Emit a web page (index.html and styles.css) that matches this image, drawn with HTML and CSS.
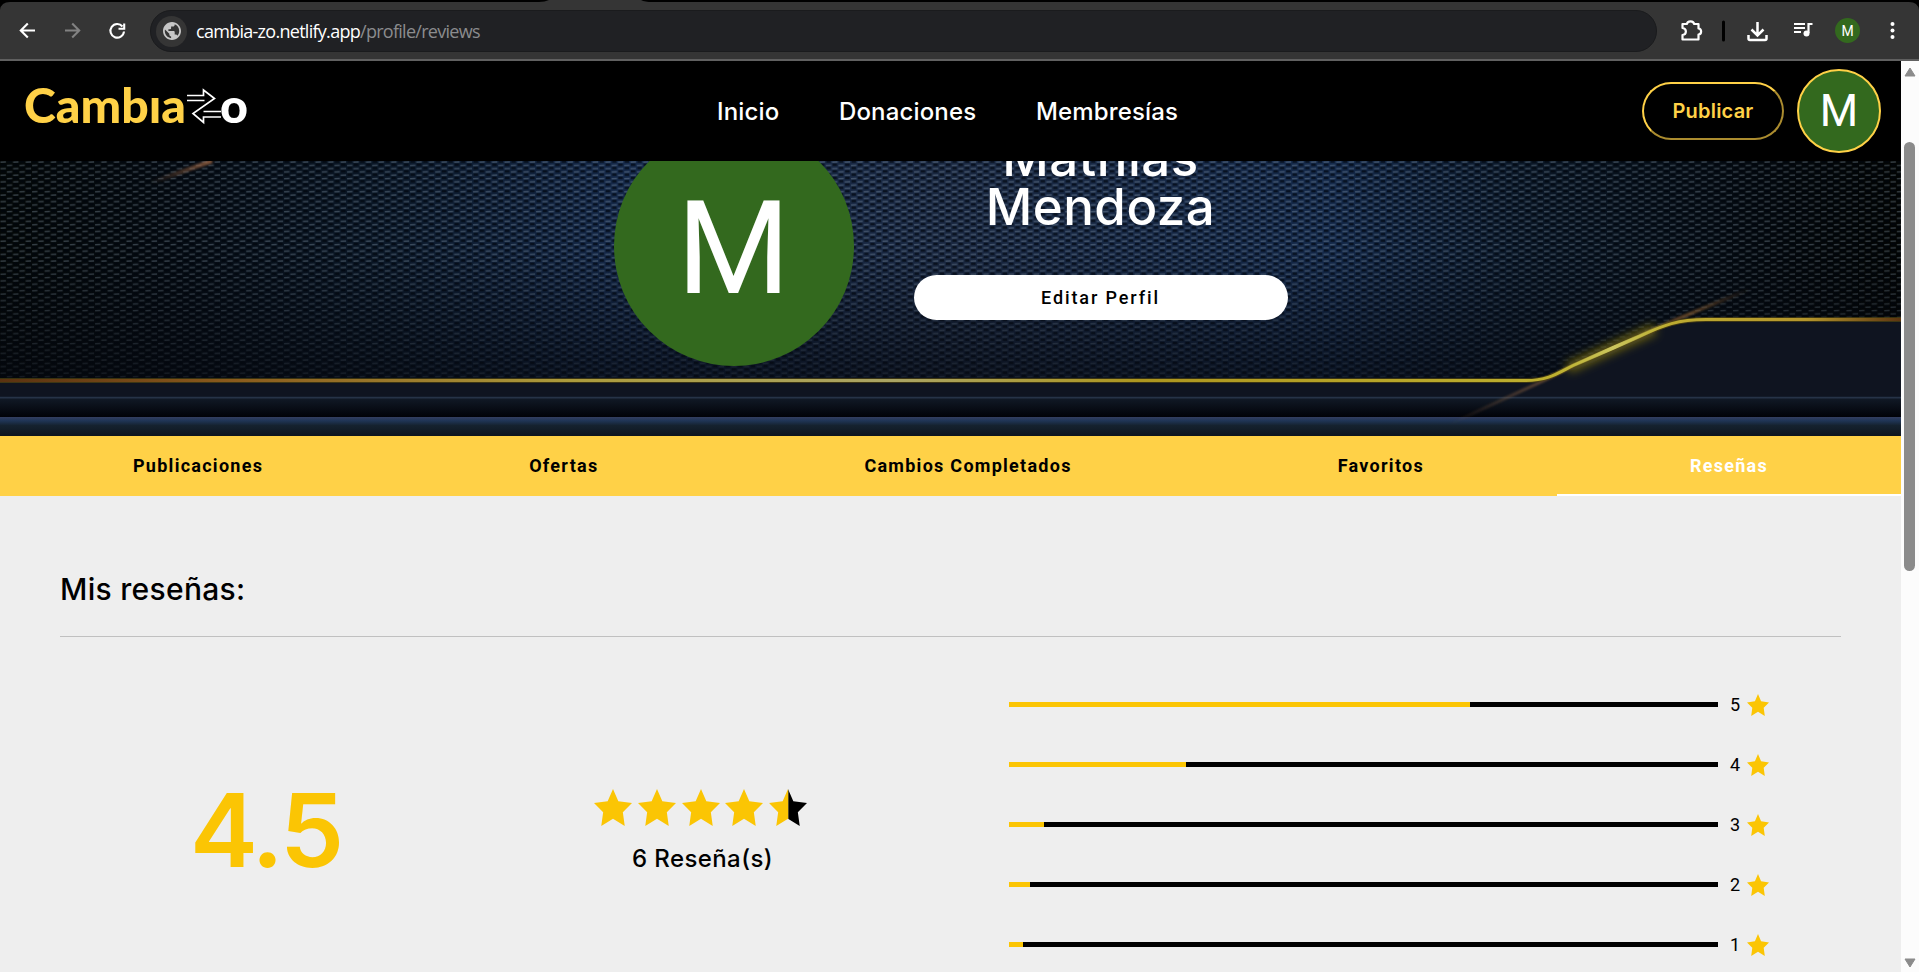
FILE: index.html
```html
<!DOCTYPE html>
<html lang="es">
<head>
<meta charset="utf-8">
<title>CambiaZo - Reseñas</title>
<link rel="stylesheet" href="styles.css">
</head>
<body>
<svg width="0" height="0" class="defs">
  <symbol id="star" viewBox="2 2 20 19" preserveAspectRatio="none"><path d="M12 17.27L18.18 21l-1-7.03L22 9.24l-7.19-.91L12 2 9.190 8.330 2 9.240l4.820 4.730L5.820 21z"/></symbol>
</svg>
<div class="browser">
  <svg class="tabstrip" width="1919" height="10" viewBox="0 0 1919 10"><path d="M0 0H1919V10Q1918 2 1909 2H652Q645 2 641 0H549Q545 2 539 2H10Q1 2 0 10Z" fill="#000"/></svg>
  <div class="toolbar">
    <svg class="nav-icons" width="150" height="57" viewBox="0 2 150 57" fill="none" stroke-width="2.1">
      <path d="M35 30.500H21M27.800 23.500L20.800 30.500L27.800 37.500" stroke="#fff"/>
      <path d="M65 30.500H79M72.200 23.500L79.200 30.500L72.200 37.500" stroke="#828282"/>
      <path d="M122.500 26.500A6.800 6.800 0 1 0 124 31.500M124.200 23.500V28.800H118.500" stroke="#fff"/>
    </svg>
    <div class="address">
      <span class="site"><svg width="18" height="18" viewBox="2 2 20 20"><path fill="#c7c7c7" d="M12 2C6.480 2 2 6.480 2 12s4.480 10 10 10 10-4.480 10-10S17.520 2 12 2zm-1 17.930c-3.950-.49-7-3.850-7-7.930 0-.62.080-1.210.21-1.790L9 15v1c0 1.100.9 2 2 2v1.930zm6.900-2.540c-.26-.81-1-1.390-1.900-1.390h-1v-3c0-.55-.45-1-1-1H8v-2h2c.55 0 1-.45 1-1V7h2c1.100 0 2-.9 2-2v-.41c2.930 1.190 5 4.060 5 7.410 0 2.080-.8 3.970-2.100 5.390z"/></svg></span>
      <span class="url">cambia-zo.netlify.app<span>/profile/reviews</span></span>
    </div>
    <svg class="actions" width="262" height="57" viewBox="1657 2 262 57" fill="none" stroke="#fff" stroke-width="2.2">
      <path d="M1682.500 24H1687C1687.300 20.600 1693.700 20.600 1694 24H1698.500V28.500C1702 28.800 1702 34.200 1698.500 34.500V39.500H1682.500V35C1687 34.500 1687 28.500 1682.500 28Z" stroke-linejoin="round"/>
      <path d="M1723.500 22V40" stroke="#000" stroke-width="3" stroke-linecap="round"/>
      <path d="M1757.500 22V35M1751.500 29.500L1757.500 35.500L1763.500 29.500M1748.500 35V38.500Q1748.500 40 1750 40H1765Q1766.500 40 1766.500 38.500V35" stroke-width="2.500"/>
      <path d="M1794 24H1805M1794 28H1805M1794 32H1801M1808.500 33V24H1812.500" stroke-width="2.200"/>
      <circle cx="1806.500" cy="33.500" r="3" fill="#fff" stroke="none"/>
      <g fill="#fff" stroke="none"><circle cx="1892.500" cy="24" r="2"/><circle cx="1892.500" cy="30.500" r="2"/><circle cx="1892.500" cy="37" r="2"/></g>
      <circle cx="1847.500" cy="30.500" r="12.500" fill="#33691e" stroke="none"/>
      <text x="1847.500" y="35.500" class="mini">M</text>
    </svg>
  </div>
  <div class="viewport">
    <main class="page">
      <header class="header">
        <svg class="logo" width="240" height="70" viewBox="20 71 240 70">
          <text x="24" y="123" class="logo-text yellow" textLength="162" lengthAdjust="spacingAndGlyphs">Cambıa</text>
          <path d="M187 95.500H203.500V90L214.500 98.500L193 113.500L203.500 122.500V117H221M187 100.500H204.500M203.500 111.500H221" class="logo-arrow"/>
          <text x="220" y="123" class="logo-text" textLength="28" lengthAdjust="spacingAndGlyphs">o</text>
        </svg>
        <nav class="menu"><a class="m1">Inicio</a><a class="m2">Donaciones</a><a class="m3">Membresías</a></nav>
        <div class="account"><button class="publish">Publicar</button><div class="avatar small">M</div></div>
      </header>
      <section class="hero">
        <svg class="hero-art" width="1901" height="275" viewBox="0 0 1901 275">
          <defs>
            <linearGradient id="base" x2="1"><stop offset="0" stop-color="#030707"/><stop offset=".09" stop-color="#050b12"/><stop offset=".2" stop-color="#0b1828"/><stop offset=".33" stop-color="#15294a"/><stop offset=".5" stop-color="#1a2841"/><stop offset=".7" stop-color="#14294a"/><stop offset=".8" stop-color="#0b1828"/><stop offset=".93" stop-color="#04090e"/><stop offset="1" stop-color="#020403"/></linearGradient>
            <linearGradient id="shade" x2="0" y2="1"><stop offset=".4" stop-color="#05080f" stop-opacity="0"/><stop offset="1" stop-color="#05080f" stop-opacity=".7"/></linearGradient>
            <pattern id="mesh" width="12.600" height="6.600" patternUnits="userSpaceOnUse">
              <path d="M.5 1.200L5.900 .9M6.900 4.500L12.200 4.200" stroke="#91a3b5" stroke-opacity=".36" stroke-width="1.500"/>
              <path d="M1 3.700H5.400M7.400 .4H11.600M7.400 7H11.600" stroke="#00040c" stroke-opacity=".65" stroke-width="2.400"/>
            </pattern>
            <linearGradient id="gold" gradientUnits="userSpaceOnUse" x1="0" x2="1901" y1="0" y2="0"><stop offset="0" stop-color="#5b3210"/><stop offset=".12" stop-color="#8a5a1c"/><stop offset=".3" stop-color="#ac9b3c"/><stop offset=".47" stop-color="#aaa464"/><stop offset=".6" stop-color="#ad961f"/><stop offset=".85" stop-color="#c0b332"/><stop offset=".95" stop-color="#b5962c"/><stop offset="1" stop-color="#5c3510"/></linearGradient>
            <linearGradient id="band1" x2="0" y2="1"><stop offset="0" stop-color="#121b28"/><stop offset="1" stop-color="#010208"/></linearGradient>
            <linearGradient id="band2" x2="0" y2="1"><stop offset="0" stop-color="#343e60"/><stop offset=".2" stop-color="#1f3556"/><stop offset=".45" stop-color="#15222f"/><stop offset="1" stop-color="#0e151e"/></linearGradient>
            <linearGradient id="flare" gradientUnits="userSpaceOnUse" x1="1450" y1="263" x2="1750" y2="128"><stop offset="0" stop-color="#8a6040" stop-opacity="0"/><stop offset=".35" stop-color="#8a6040" stop-opacity=".7"/><stop offset=".8" stop-color="#80562c" stop-opacity=".75"/><stop offset="1" stop-color="#80562c" stop-opacity="0"/></linearGradient>
            <linearGradient id="corner" gradientUnits="userSpaceOnUse" x1="150" y1="22" x2="212" y2="0"><stop offset="0" stop-color="#8a5a3a" stop-opacity="0"/><stop offset="1" stop-color="#a56a45" stop-opacity=".8"/></linearGradient>
            <linearGradient id="hot" gradientUnits="userSpaceOnUse" x1="1555" y1="213" x2="1672" y2="160"><stop offset="0" stop-color="#c3be49" stop-opacity="0"/><stop offset=".5" stop-color="#cbc65f"/><stop offset="1" stop-color="#c3be49" stop-opacity="0"/></linearGradient>
            <filter id="glow" x="-20%" y="-50%" width="140%" height="200%"><feGaussianBlur stdDeviation="5"/></filter>
            <filter id="soft" x="-20%" y="-50%" width="140%" height="200%"><feGaussianBlur stdDeviation="1"/></filter>
          </defs>
          <rect width="1901" height="222" fill="url(#base)"/>
          <rect width="1901" height="222" fill="url(#mesh)"/>
          <rect width="1901" height="222" fill="url(#shade)"/>
          <path d="M150 22L212 0" stroke="url(#corner)" stroke-width="4" filter="url(#soft)"/>
          <path d="M0 219.500H1526C1548 219.500 1558 212 1573 204.500L1640 175C1664 164 1678 158.500 1706 158.500H1901V236H0Z" fill="#0f1420"/>
          <rect y="235" width="1901" height="1.500" fill="#01040c"/>
          <rect y="236" width="1901" height="20" fill="url(#band1)"/>
          <rect y="235.500" width="1901" height="2" fill="#263347"/>
          <rect y="256" width="1901" height="19" fill="url(#band2)"/>
          <path d="M1568 207L1655 168" stroke="#9c8a14" stroke-width="10" stroke-opacity=".7" filter="url(#glow)"/>
          <path d="M1450 263L1545 219L1573 205M1640 175L1675 159L1750 128" fill="none" stroke="url(#flare)" stroke-width="3" filter="url(#soft)"/>
          <path d="M0 219.500H1526C1548 219.500 1558 212 1573 204.500L1640 175C1664 164 1678 158.500 1706 158.500H1901" fill="none" stroke="#51450f" stroke-opacity=".7" stroke-width="5"/>
          <path d="M0 219.500H1526C1548 219.500 1558 212 1573 204.500L1640 175C1664 164 1678 158.500 1706 158.500H1901" fill="none" stroke="url(#gold)" stroke-width="3"/>
          <path d="M1555 213L1573 204.500L1640 175L1672 160" fill="none" stroke="url(#hot)" stroke-width="4"/>
        </svg>
        <div class="avatar large">M</div>
        <div class="identity"><h1><span>Mathias</span><span>Mendoza</span></h1><button class="edit">Editar Perfil</button></div>
      </section>
      <nav class="tabs"><a>Publicaciones</a><a>Ofertas</a><a>Cambios Completados</a><a>Favoritos</a><a class="active">Reseñas</a></nav>
      <section class="reviews">
        <h2>Mis reseñas:</h2>
        <div class="summary">
          <div class="score">4.5</div>
          <div class="rating">
            <div class="stars">
              <svg><use href="#star"/></svg><svg><use href="#star"/></svg><svg><use href="#star"/></svg><svg><use href="#star"/></svg><span class="half"><svg class="dark"><use href="#star"/></svg><svg class="cut"><use href="#star"/></svg></span>
            </div>
            <p>6 Reseña(s)</p>
          </div>
          <div class="bars">
            <div class="row"><div class="track"><i style="width:65%"></i></div><b>5</b><svg><use href="#star"/></svg></div>
            <div class="row"><div class="track"><i style="width:25%"></i></div><b>4</b><svg><use href="#star"/></svg></div>
            <div class="row"><div class="track"><i style="width:5%"></i></div><b>3</b><svg><use href="#star"/></svg></div>
            <div class="row"><div class="track"><i style="width:3%"></i></div><b>2</b><svg><use href="#star"/></svg></div>
            <div class="row"><div class="track"><i style="width:2%"></i></div><b>1</b><svg><use href="#star"/></svg></div>
          </div>
        </div>
      </section>
    </main>
    <aside class="scrollbar">
      <svg width="12" height="10" viewBox="0 0 12 10"><path d="M6 1L11 9H1Z" fill="#8b8b8b" stroke="#8b8b8b" stroke-linejoin="round"/></svg>
      <div class="thumb"></div>
      <svg width="12" height="10" viewBox="0 0 12 10"><path d="M6 9L11 1H1Z" fill="#8b8b8b" stroke="#8b8b8b" stroke-linejoin="round"/></svg>
    </aside>
  </div>
</div>
</body>
</html>
```

FILE: styles.css
```css
* { box-sizing: border-box; }
body { margin: 0; overflow: hidden; background: #eee; font-family: Roboto, sans-serif; color: #000; }
h1, h2, p { margin: 0; font-weight: 500; }
.defs { position: absolute; }
.browser { width: 1919px; height: 972px; display: flex; flex-direction: column; overflow: hidden; background: #353535; }
.tabstrip { display: block; margin-bottom: -8px; flex: none; }
.toolbar { height: 59px; flex: none; display: flex; align-items: flex-start; border-bottom: 2px solid #606060; }
.nav-icons, .actions { flex: none; }
.address { width: 1507px; height: 42px; margin-top: 8px; border-radius: 21px; background: #202124; border: 1px solid #1a1b1d; display: flex; align-items: center; padding-left: 5px; gap: 9px; }
.site { width: 31px; height: 31px; border-radius: 50%; background: #353535; display: flex; align-items: center; justify-content: center; }
.url { font-family: "Open Sans", sans-serif; font-size: 18px; letter-spacing: -.72px; color: #fff; }
.url span { color: #8b8c8e; }
.mini { font: 14px Roboto, sans-serif; fill: #fff; stroke: none; text-anchor: middle; }
.viewport { display: flex; height: 911px; }
.page { width: 1901px; background: #eee; }
.header { height: 100px; background: #000; display: flex; align-items: center; padding: 0 20px; }
.logo { flex: none; margin-top: -10px; }
.logo-text { font: 900 48px Lato, sans-serif; fill: #fff; }
.logo-text.yellow { fill: #ffd147; }
.logo-arrow { fill: none; stroke: #fff; stroke-width: 1.7; }
.menu { display: flex; margin-left: 457px; color: #fff; font: 500 24px Inter, sans-serif; letter-spacing: .15px; white-space: nowrap; }
.m1 { width: 122px; }
.m2 { width: 197px; }
.account { margin-left: auto; display: flex; align-items: center; gap: 13px; }
.publish { width: 142px; height: 58px; border-radius: 30px; background: #000; border: 2px outset #ffd147; color: #ffd147; font: 600 20px Inter, sans-serif; letter-spacing: .2px; padding: 0; }
.avatar { border-radius: 50%; background: #33691e; color: #fff; display: flex; align-items: center; justify-content: center; flex: none; font-family: Roboto, sans-serif; }
.small { width: 84px; height: 84px; border: 2px solid #ffd147; font-size: 44px; }
.large { width: 240px; height: 240px; font-size: 130px; font-weight: 400; position: relative; padding-top: 4px; }
.hero { position: relative; height: 275px; overflow: hidden; display: flex; align-items: flex-end; justify-content: center; gap: 60px; padding-bottom: 70px; }
.hero-art { position: absolute; left: 0; top: 0; }
.identity { position: relative; width: 374px; padding-bottom: 46px; text-align: center; color: #fff; }
.identity h1 { font: 500 51px/49px Inter, sans-serif; letter-spacing: .5px; margin-bottom: 44px; }
.identity h1 span { display: block; }
.edit { display: block; width: 374px; height: 45px; border: 0; border-radius: 23px; background: #fff; color: #000; font: 500 18px Roboto, sans-serif; letter-spacing: 1.9px; }
.tabs { height: 60px; background: #ffd147; display: flex; }
.tabs a { flex: 1 1 auto; display: flex; align-items: center; justify-content: center; font-weight: 700; font-size: 18px; letter-spacing: 1.27px; border-bottom: 2px solid transparent; }
.tabs .active { color: #fff; border-color: #fff; }
.reviews { padding: 0 60px; }
.reviews h2 { height: 141px; padding-top: 75px; border-bottom: 1px solid #c0c0c0; font: 500 30px/36px Inter, sans-serif; letter-spacing: .3px; }
.summary { display: flex; padding-top: 37px; }
.score { width: 411px; padding-top: 96px; text-align: center; color: #fbc504; font: 600 102px/120px Inter, sans-serif; letter-spacing: -3px; }
.rating { width: 538px; padding: 115px 0 0 123px; }
.stars { display: flex; gap: 5.8px; fill: #fbc504; }
.stars svg { width: 38px; height: 37px; display: block; }
.half { position: relative; }
.dark { fill: #000; }
.half .dark { clip-path: inset(0 0 0 50%); }
.half .cut { position: absolute; left: 0; top: 0; clip-path: inset(0 50% 0 0); }
.rating p { width: 217px; margin-top: 17px; text-align: center; font: 500 24px/32px Inter, sans-serif; letter-spacing: .4px; }
.row { height: 60px; display: flex; align-items: center; }
.track { width: 709px; height: 5px; background: #000; }
.track i { display: block; height: 5px; background: #fbc504; }
.row b { font-weight: 400; font-size: 18px; width: 29px; padding-left: 12px; }
.row svg { width: 22px; height: 22px; fill: #fbc504; margin-top: 2px; }
.scrollbar { width: 18px; background: #fcfcfc; display: flex; flex-direction: column; align-items: center; padding: 6px 0 4px; padding-right: 1px; }
.thumb { width: 11px; height: 429px; margin: 65px 0 auto; border-radius: 6px; background: #8b8b8b; }
```
